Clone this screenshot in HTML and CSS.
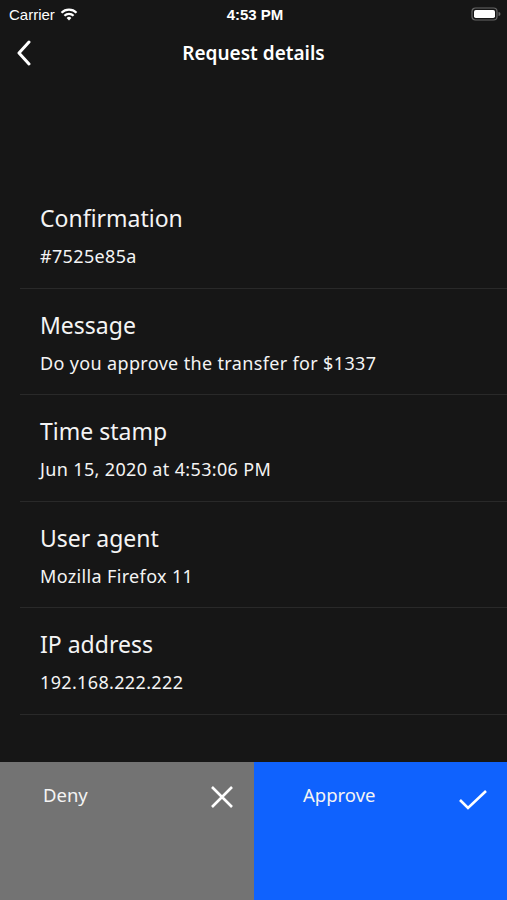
FILE: index.html
```html
<!DOCTYPE html>
<html lang="en">
<head>
  <meta charset="UTF-8">
  <title>Request details</title>
  <link rel="stylesheet" href="styles.css">
</head>
<body>
  <div class="screen">
    <div class="statusbar">
      <span class="carrier">Carrier
        <svg class="wifi" width="18" height="13" viewBox="0 0 18 13">
          <path d="M9 12.5 L6.6 10 A3.4 3.4 0 0 1 11.4 10 Z" fill="#fff"/>
          <path d="M4.4 7.8 A6.5 6.5 0 0 1 13.6 7.8" stroke="#fff" stroke-width="2.2" fill="none"/>
          <path d="M1.5 4.8 A10.6 10.6 0 0 1 16.5 4.8" stroke="#fff" stroke-width="2.2" fill="none"/>
        </svg>
      </span>
      <span class="clock">4:53 PM</span>
      <span class="power">
        <svg width="30" height="14" viewBox="0 0 30 14">
          <rect x="1" y="1" width="25" height="12" rx="3.5" fill="none" stroke="#666" stroke-width="1.2"/>
          <rect x="3" y="3" width="21" height="8" rx="1.8" fill="#fff"/>
          <path d="M27.5 5 A2 2 0 0 1 27.5 9 Z" fill="#666"/>
        </svg>
      </span>
    </div>

    <div class="navbar">
      <svg class="back" width="16" height="26" viewBox="0 0 16 26">
        <path d="M13 2 L3 13 L13 24" stroke="#fff" stroke-width="3" fill="none" stroke-linecap="round" stroke-linejoin="round"/>
      </svg>
      <h1>Request details</h1>
    </div>

    <div class="details">
      <div class="row">
        <div class="label">Confirmation</div>
        <div class="value">#7525e85a</div>
      </div>
      <div class="row">
        <div class="label">Message</div>
        <div class="value">Do you approve the transfer for $1337</div>
      </div>
      <div class="row">
        <div class="label">Time stamp</div>
        <div class="value">Jun 15, 2020 at 4:53:06 PM</div>
      </div>
      <div class="row">
        <div class="label">User agent</div>
        <div class="value">Mozilla Firefox 11</div>
      </div>
      <div class="row">
        <div class="label">IP address</div>
        <div class="value">192.168.222.222</div>
      </div>
    </div>

    <div class="actions">
      <div class="action deny">
        <span>Deny</span>
        <svg width="24" height="24" viewBox="0 0 24 24">
          <path d="M2 2 L22 22 M22 2 L2 22" stroke="#fff" stroke-width="2.6" fill="none"/>
        </svg>
      </div>
      <div class="action approve">
        <span>Approve</span>
        <svg width="30" height="22" viewBox="0 0 30 22">
          <path d="M2 11 L10 19 L28 2" stroke="#fff" stroke-width="2.6" fill="none"/>
        </svg>
      </div>
    </div>
  </div>
</body>
</html>
```

FILE: styles.css
```css
body { margin: 0; background: #161616; color: #f4f4f4; font-family: "Noto Sans", "Open Sans", sans-serif; }
.screen { width: 507px; height: 900px; display: flex; flex-direction: column; overflow: hidden; }

.statusbar { height: 28px; display: flex; align-items: center; justify-content: space-between; padding: 0 6px 0 9px; font-family: "Liberation Sans", Arial, sans-serif; font-size: 15px; color: #fff; }
.carrier { display: flex; align-items: center; gap: 5px; width: 120px; }
.clock { font-weight: bold; }
.power { width: 120px; display: flex; justify-content: flex-end; }
.power svg { display: block; }

.navbar { height: 50px; position: relative; display: flex; align-items: center; justify-content: center; }
.navbar h1 { margin: 0; font-size: 19px; font-weight: 600; color: #fff; }
.back { position: absolute; left: 16px; top: 12px; }

.details { margin-top: 104px; }
.row { margin-left: 20px; padding: 22px 20px 0; height: 83.5px; border-bottom: 1px solid #292929; }
.label { font-size: 23px; line-height: 28px; }
.value { margin-top: 12px; font-size: 18px; line-height: 24px; letter-spacing: 0.35px; }

.actions { margin-top: auto; height: 138px; display: grid; grid-template-columns: 254px 1fr; }
.action { display: flex; justify-content: space-between; align-items: flex-start; padding: 21px 20px 0 43px; font-size: 18.5px; line-height: 24px; color: #f4f4f4; }
.action svg { display: block; margin-top: 2px; }
.deny { background: #737373; }
.approve { background: #0f62fe; padding-left: 49px; padding-right: 19px; }
.approve svg { margin-top: 6px; }
```
